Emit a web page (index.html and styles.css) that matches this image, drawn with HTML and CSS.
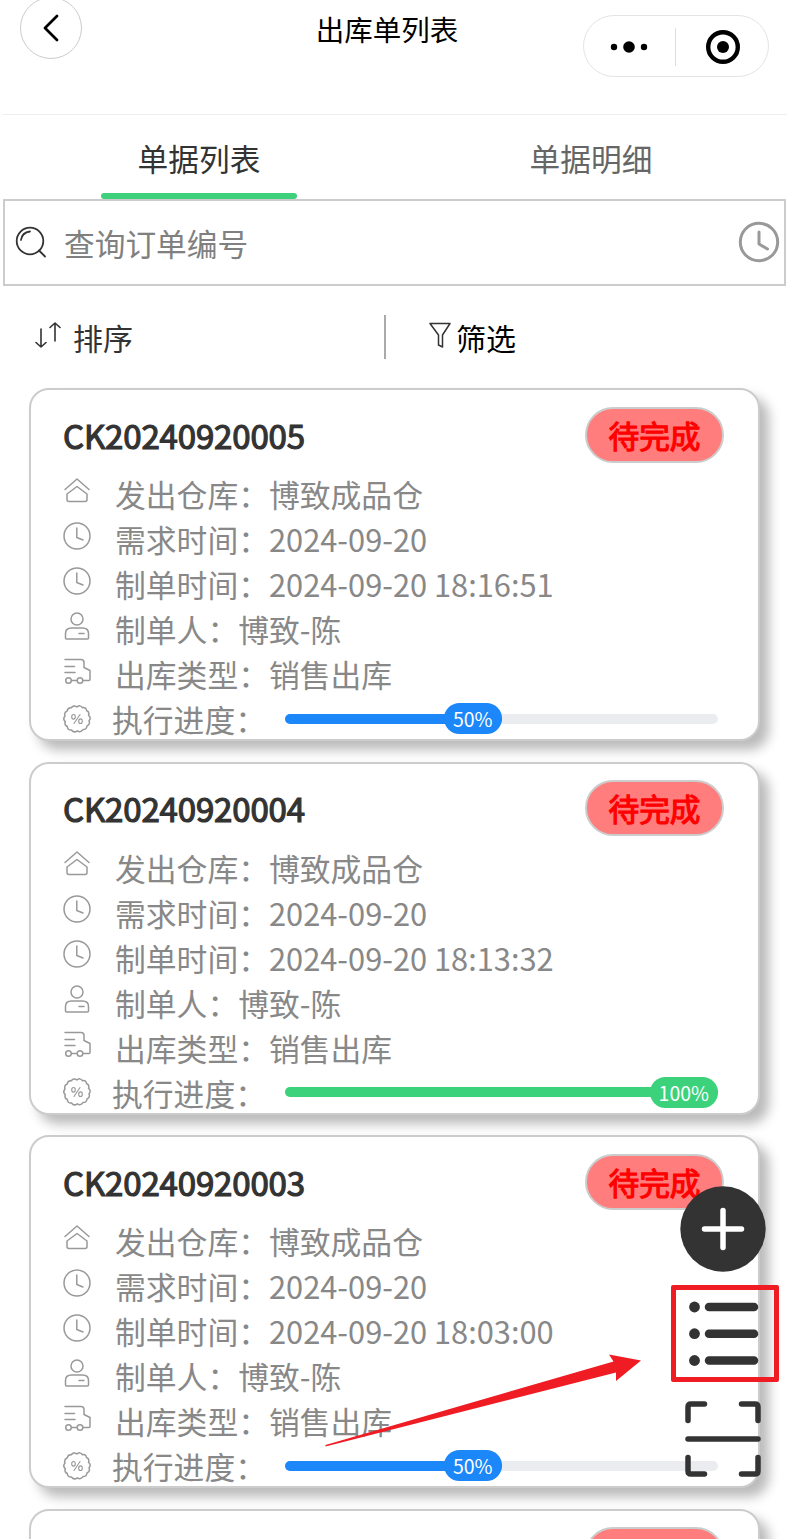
FILE: index.html
```
<!DOCTYPE html>
<html lang="zh-CN">
<head>
  <meta charset="UTF-8" />
  <meta name="viewport" content="width=device-width, initial-scale=1.0" />
  <title>出库单列表</title>
  <link rel="stylesheet" href="styles.css">
</head>
<body>

<svg class="sprite" width="0" height="0">
  <symbol id="i-home" viewBox="0 0 28 28">
    <path d="M2 12.500 14 2l12 10.500M4 17l10-7.500 10 7.500v5.500q0 2-2 2h-16q-2 0-2-2z" />
  </symbol>
  <symbol id="i-clock" viewBox="0 0 28 28">
    <circle cx="14" cy="14" r="13" />
    <path d="M13.800 6v9.500l6.200 2.500" />
  </symbol>
  <symbol id="i-user" viewBox="0 0 28 28">
    <circle cx="14" cy="7" r="6" />
    <path d="M2.500 26v-4.500q0-5.500 6-5.500h11q6 0 6 5.500v4.500q0 1-1 1h-21q-1 0-1-1zM16 21.500h5" />
  </symbol>
  <symbol id="i-truck" viewBox="0 0 28 28">
    <path d="M2 2.500h16q3 0 3 3v5l6 3v9q0 1-1 1h-6M2 9.500h9.500M2 15.500h10M8.500 23.500h5" />
    <circle cx="5.500" cy="23.500" r="2.800" />
    <circle cx="17" cy="23.500" r="2.800" />
  </symbol>
  <symbol id="i-rate" viewBox="0 0 28 28">
    <path d="M14 2Q17.200-.6 19.500 2.700 23.300 2.100 23.500 5.500 26.800 7 25.500 10.200 28.600 13 26 15.800 27.500 19.300 24 21 23.600 24.700 20 24.600 17.600 28 14.300 25.800 11 28.300 8.500 25 4.500 25.300 4.300 21.500 1 20 2.300 16.600-.6 14 2 11 .7 7.500 4.200 6 4.700 2.300 8.300 2.700 10.700-.5 14 2z" />
    <g stroke-width="1.100">
      <ellipse cx="10.500" cy="11.800" rx="1.800" ry="2.300" />
      <ellipse cx="17.500" cy="16.200" rx="1.800" ry="2.300" />
      <path d="M17 9.500l-6 9" />
    </g>
  </symbol>
</svg>

<div class="page">
  <header class="navbar">
    <button class="back" type="button">
      <svg width="18" height="28" viewBox="0 0 18 28"><path d="M15 2 3 14l12 12" /></svg>
    </button>
    <h1>出库单列表</h1>
    <div class="capsule">
      <svg class="dots" width="38" height="14" viewBox="0 0 38 14">
        <circle cx="4" cy="7" r="3.200" /><circle cx="19" cy="7" r="5.800" /><circle cx="34" cy="7" r="3.200" />
      </svg>
      <span class="line"></span>
      <svg class="target" width="36" height="36" viewBox="0 0 36 36">
        <circle class="ring" cx="18" cy="18" r="14.800" /><circle cx="18" cy="18" r="6" />
      </svg>
    </div>
  </header>

  <nav class="tabs">
    <a class="tab active">单据列表</a>
    <a class="tab">单据明细</a>
  </nav>

  <div class="search">
    <svg class="search-icon" width="32" height="32" viewBox="0 0 32 32">
      <circle cx="15" cy="15" r="13.300" /><path d="M24 24.500l6 6M6 14q1-7.500 9-8.500" />
    </svg>
    <span class="placeholder">查询订单编号</span>
    <svg class="history" width="42" height="42" viewBox="0 0 42 42">
      <circle cx="21" cy="21" r="18.700" /><path d="M21 11v12l8.500 5" />
    </svg>
  </div>

  <div class="toolbar">
    <div class="sort">
      <svg width="26" height="28" viewBox="0 0 26 28">
        <path d="M6 8v18M1 21.500l5 4.500 5-4.500M20 20V2M15 6.500l5-4.500 5 4.500" />
      </svg>
      <span>排序</span>
    </div>
    <div class="filter">
      <svg width="22" height="27" viewBox="0 0 22 27">
        <path d="M1 1.500h20l-7.500 11.500v12l-4-2V13z" />
      </svg>
      <span>筛选</span>
    </div>
  </div>

  <main class="list">
    <section class="card">
      <div class="card-head"><h2>CK20240920005</h2><span class="status">待完成</span></div>
      <div class="row"><svg class="icon"><use href="#i-home" /></svg><span>发出仓库：博致成品仓</span></div>
      <div class="row"><svg class="icon"><use href="#i-clock" /></svg><span>需求时间：2024-09-20</span></div>
      <div class="row"><svg class="icon"><use href="#i-clock" /></svg><span>制单时间：2024-09-20 18:16:51</span></div>
      <div class="row"><svg class="icon"><use href="#i-user" /></svg><span>制单人：博致-陈</span></div>
      <div class="row"><svg class="icon"><use href="#i-truck" /></svg><span>出库类型：销售出库</span></div>
      <div class="row rate"><svg class="icon"><use href="#i-rate" /></svg><span class="rate-label">执行进度：</span>
        <div class="progress"><div class="bar" style="width: 50%"><span class="pct">50%</span></div></div>
      </div>
    </section>

    <section class="card">
      <div class="card-head"><h2>CK20240920004</h2><span class="status">待完成</span></div>
      <div class="row"><svg class="icon"><use href="#i-home" /></svg><span>发出仓库：博致成品仓</span></div>
      <div class="row"><svg class="icon"><use href="#i-clock" /></svg><span>需求时间：2024-09-20</span></div>
      <div class="row"><svg class="icon"><use href="#i-clock" /></svg><span>制单时间：2024-09-20 18:13:32</span></div>
      <div class="row"><svg class="icon"><use href="#i-user" /></svg><span>制单人：博致-陈</span></div>
      <div class="row"><svg class="icon"><use href="#i-truck" /></svg><span>出库类型：销售出库</span></div>
      <div class="row rate"><svg class="icon"><use href="#i-rate" /></svg><span class="rate-label">执行进度：</span>
        <div class="progress done"><div class="bar" style="width: 100%"><span class="pct">100%</span></div></div>
      </div>
    </section>

    <section class="card">
      <div class="card-head"><h2>CK20240920003</h2><span class="status">待完成</span></div>
      <div class="row"><svg class="icon"><use href="#i-home" /></svg><span>发出仓库：博致成品仓</span></div>
      <div class="row"><svg class="icon"><use href="#i-clock" /></svg><span>需求时间：2024-09-20</span></div>
      <div class="row"><svg class="icon"><use href="#i-clock" /></svg><span>制单时间：2024-09-20 18:03:00</span></div>
      <div class="row"><svg class="icon"><use href="#i-user" /></svg><span>制单人：博致-陈</span></div>
      <div class="row"><svg class="icon"><use href="#i-truck" /></svg><span>出库类型：销售出库</span></div>
      <div class="row rate"><svg class="icon"><use href="#i-rate" /></svg><span class="rate-label">执行进度：</span>
        <div class="progress"><div class="bar" style="width: 50%"><span class="pct">50%</span></div></div>
      </div>
    </section>

    <section class="card">
      <div class="card-head"><h2></h2><span class="status"></span></div>
    </section>
  </main>

  <!-- floating actions -->
  <div class="actions">
    <svg class="add" width="86" height="86" viewBox="0 0 86 86">
      <circle cx="43" cy="43" r="42.700" /><path d="M43 24.500v37M24.500 43h37" />
    </svg>
    <div class="menu">
      <svg width="72" height="66" viewBox="0 0 72 66">
        <path d="M21 6h45M21 32.700h45M21 59.500h45" />
        <circle cx="6.500" cy="6" r="5.400" /><circle cx="6.500" cy="32.700" r="5.400" /><circle cx="6.500" cy="59.500" r="5.400" />
      </svg>
    </div>
    <svg class="scan" width="76" height="76" viewBox="0 0 76 76">
      <path d="M3 19.500V6q0-3 3-3h13.500M56.500 3H70q3 0 3 3v13.500M3 56.500V70q0 3 3 3h13.500M56.500 73H70q3 0 3-3V56.500M3 38h70" />
    </svg>
  </div>

  <svg class="arrow" width="318" height="96" viewBox="0 0 318 96">
    <path d="M.500 91 288.500 7.500 284 .500l32 6L291 27v-8.500L.500 92.500z" />
  </svg>
</div>

</body>
</html>
```
FILE: styles.css
```
* {
  box-sizing: border-box;
}
body {
  margin: 0;
  background: #fff;
  font-family: "Noto Sans CJK SC", sans-serif;
  color: #333;
}
svg {
  display: block;
  flex: none;
  fill: none;
  stroke-linecap: round;
  stroke-linejoin: round;
}
.sprite {
  position: absolute;
}
.page {
  position: relative;
  height: 1539px;
  padding: 0 5px 0 3px;
  overflow: hidden;
}

/* top bar */
.navbar {
  display: grid;
  grid-template-columns: 1fr auto 1fr;
  align-items: start;
  height: 115px;
  padding: 0 18px 0 17px;
  border-bottom: 1px solid #eee;
}
.back {
  display: flex;
  align-items: center;
  justify-content: center;
  width: 62px;
  height: 62px;
  margin-top: -3px;
  padding: 0;
  background: #fff;
  border: 1px solid #ccc;
  border-radius: 50%;
}
.back svg {
  stroke: #000;
  stroke-width: 2.800;
}
h1 {
  margin: 8px 15px 0 0;
  color: #000;
  font-size: 28.500px;
  font-weight: 400;
  line-height: 42px;
}
.capsule {
  display: flex;
  justify-self: end;
  align-items: center;
  width: 186px;
  height: 62px;
  margin-top: 15px;
  padding: 1px 0 0 26px;
  border: 1px solid #e4e4e4;
  border-radius: 31px;
}
.capsule svg {
  fill: #000;
}
.capsule .line {
  width: 1px;
  height: 38px;
  margin: 0 29px 0 27px;
  background: #ddd;
}
.capsule .ring {
  fill: none;
  stroke: #000;
  stroke-width: 4.400;
}

/* tabs */
.tabs {
  display: flex;
  height: 84px;
}
.tab {
  display: flex;
  flex: 1;
  flex-direction: column;
  align-items: center;
  justify-content: space-between;
  padding-top: 20px;
  color: #666;
  font-size: 30.700px;
  line-height: 45px;
}
.tab.active {
  color: #333;
}
.tab.active::after {
  content: "";
  width: 196px;
  height: 6px;
  background: #3fd07c;
  border-radius: 3px;
}

/* search */
.search {
  display: flex;
  align-items: center;
  width: 783px;
  height: 87px;
  padding: 0 4px 2px 10px;
  border: 2px solid #ccc;
}
.search-icon {
  stroke: #333;
  stroke-width: 1.800;
}
.placeholder {
  flex: 1;
  margin: 2px 0 0 17px;
  color: #808080;
  font-size: 30.700px;
}
.history {
  stroke: #999;
  stroke-width: 3;
}

/* sort and filter */
.toolbar {
  display: flex;
  height: 44px;
  margin: 29px 0;
  font-size: 30px;
  line-height: 44px;
}
.sort {
  display: flex;
  width: 383px;
  padding-left: 32px;
  border-right: 2px solid #aaa;
}
.sort svg {
  margin: 6px 12px 0 0;
  stroke: #333;
  stroke-width: 1.600;
}
.filter {
  display: flex;
  padding-left: 43px;
  color: #000;
}
.filter svg {
  margin: 7px 5px 0 0;
  stroke: #333;
  stroke-width: 1.500;
}

/* cards */
.card {
  width: 731px;
  height: 353px;
  margin: 0 0 20.500px 26px;
  padding: 17px 34px 0 32px;
  background: #fff;
  border: 2px solid #ccc;
  border-radius: 20px;
  box-shadow: 9px 9px 12px #bbb;
}
.card-head {
  display: flex;
  align-items: center;
  justify-content: space-between;
  height: 55px;
  margin-bottom: 9px;
}
h2 {
  margin: 0;
  font-size: 33px;
  font-weight: 400;
  letter-spacing: -0.150px;
  -webkit-text-stroke: 1.200px #333;
}
.status {
  width: 139px;
  height: 56px;
  background: #ff7d7d;
  border: 2px solid #ccc;
  border-radius: 28px;
  color: #f00;
  font-size: 30.700px;
  line-height: 52px;
  text-align: center;
  -webkit-text-stroke: 1.200px #f00;
}
.row {
  display: flex;
  align-items: center;
  height: 45px;
  color: #888;
  font-size: 30.800px;
  line-height: 45px;
  white-space: nowrap;
}
.icon {
  width: 28px;
  height: 28px;
  margin: 0 24px 6px 0;
  overflow: visible;
  stroke: #999;
  stroke-width: 1.500;
}
.rate .icon {
  margin: 0 21px 0 0;
}
.rate-label {
  width: 173px;
}
.progress {
  width: 433px;
  height: 10px;
  background: #ebecf0;
  border-radius: 5px;
}
.bar {
  display: flex;
  align-items: center;
  justify-content: flex-end;
  height: 10px;
  background: #1b87f8;
  border-radius: 5px;
}
.pct {
  padding: 0 9px;
  background: #1b87f8;
  border-radius: 16px;
  color: #fff;
  font-size: 19.500px;
  line-height: 31px;
}
.done .bar,
.done .pct {
  background: #3bd27b;
}

/* floating actions */
.actions {
  position: absolute;
  top: 1186px;
  left: 670px;
  display: flex;
  flex-direction: column;
  align-items: center;
  width: 109px;
}
.add {
  margin-right: 3px;
  fill: #333;
}
.add path {
  stroke: #fff;
  stroke-width: 5.500;
}
.menu {
  width: 108px;
  height: 97px;
  margin: 13px 0 19px;
  padding: 11px 12px;
  border: 5px solid #ef1c24;
  border-radius: 2px;
}
.menu svg {
  fill: #333;
  stroke-width: 8.500;
}
.menu path {
  stroke: #333;
}
.scan {
  margin-right: 3px;
  stroke: #333;
  stroke-width: 5.500;
}
.arrow {
  position: absolute;
  top: 1354px;
  left: 325px;
  fill: #ef1c24;
}
```
